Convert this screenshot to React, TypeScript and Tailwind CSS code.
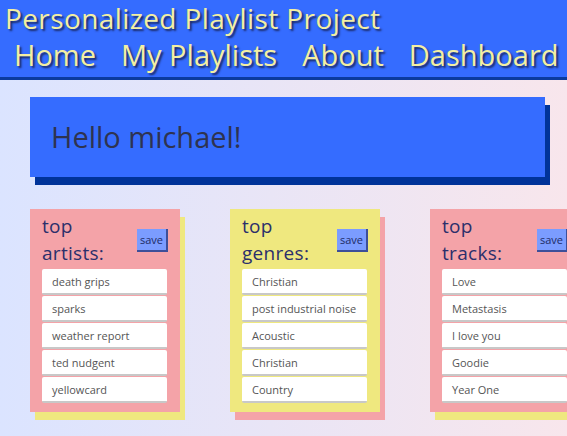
import React from 'react';

interface TopListProps {
  title: string[];
  items: string[];
  color: string;
  shadow: string;
}

const TopList: React.FC<TopListProps> = ({ title, items, color, shadow }) => {
  return (
    <div className={`w-[150px] shrink-0 pt-[4px] pb-[9px] pl-[12px] pr-[13px] ${color} ${shadow}`}>
      <div className="flex items-center justify-between">
        <h2 className="text-[19px] leading-[27px] tracking-[0.3px] text-[#2b2f6b]">
          {title.map((line) => (
            <div key={line}>{line}</div>
          ))}
        </h2>
        <button
          type="button"
          className="mr-[-1px] h-[23px] w-[31px] border-r-2 border-b-2 border-[#3d4f99] bg-[#7b9cff] text-[11px] leading-none text-[#1c2a66]"
        >
          save
        </button>
      </div>
      <ul className="mt-[2px] flex flex-col gap-[1px]">
        {items.map((item, i) => (
          <li
            key={i}
            className="h-[26px] overflow-hidden whitespace-nowrap rounded-[2px] border-b-2 border-[#c8c8c8] bg-white pl-[10px] text-[11px] leading-[25px] text-[#555]"
          >
            {item}
          </li>
        ))}
      </ul>
    </div>
  );
};

export default function App() {
  return (
    <div className="min-h-[436px] overflow-hidden bg-gradient-to-r from-[#dbe4ff] to-[#f8e6ec] font-['Open_Sans',sans-serif]">
      <header className="h-[80px] border-b-[3px] border-[#0b3b9e] bg-[#356cff] text-[#f3efa3] [text-shadow:2px_2px_2px_#1b2a66]">
        <h1 className="pl-[5px] text-[28px] leading-[36px] tracking-[0.4px] whitespace-nowrap">Personalized Playlist Project</h1>
        <nav className="flex gap-[25px] pl-[14px] text-[29px] leading-[38px] whitespace-nowrap">
          <a>Home</a>
          <a>My Playlists</a>
          <a>About</a>
          <a>Dashboard</a>
        </nav>
      </header>

      <main className="px-[30px] pt-[17px]">
        <div className="flex h-[80px] w-[515px] items-center bg-[#356cff] pl-[21px] text-[29px] text-[#2e3350] shadow-[5px_8px_0_#003399]">
          Hello michael!
        </div>

        <div className="mt-[32px] flex gap-[50px]">
          <TopList
            title={['top', 'artists:']}
            items={['death grips', 'sparks', 'weather report', 'ted nudgent', 'yellowcard']}
            color="bg-[#f4a3a8]"
            shadow="shadow-[5px_8px_0_#efe87f]"
          />
          <TopList
            title={['top', 'genres:']}
            items={['Christian', 'post industrial noise', 'Acoustic', 'Christian', 'Country']}
            color="bg-[#efe87f]"
            shadow="shadow-[5px_8px_0_#f4a3a8]"
          />
          <TopList
            title={['top', 'tracks:']}
            items={['Love', 'Metastasis', 'I love you', 'Goodie', 'Year One']}
            color="bg-[#f4a3a8]"
            shadow="shadow-[5px_8px_0_#efe87f]"
          />
        </div>
      </main>
    </div>
  );
}
